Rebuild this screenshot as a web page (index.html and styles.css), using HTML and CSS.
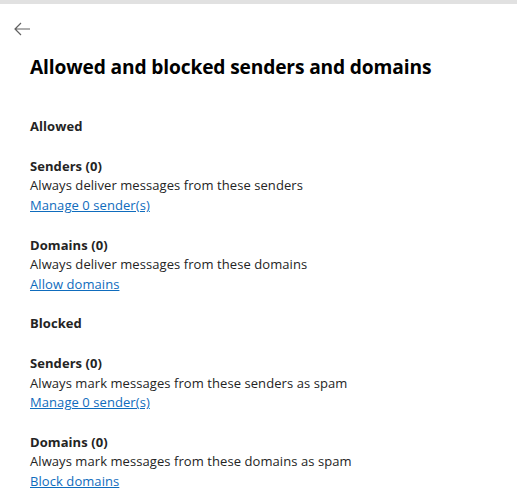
FILE: index.html
```html
<!DOCTYPE html>
<html lang="en">
<head>
<meta charset="utf-8">
<title>Allowed and blocked senders and domains</title>
<link rel="stylesheet" href="styles.css">
</head>
<body>
<div class="topbar"></div>
<div class="panel">
  <button class="back" aria-label="Back">
    <svg width="16" height="14" viewBox="0 0 16 14" fill="none" stroke="#616161" stroke-width="1.2">
      <path d="M16 7H1M7 1L1 7l6 6"/>
    </svg>
  </button>
  <h1 class="title">Allowed and blocked senders and domains</h1>
  <div class="content">
    <h2 class="section">Allowed</h2>
    <div class="group">
      <div class="label">Senders (0)</div>
      <div class="desc">Always deliver messages from these senders</div>
      <a class="link" href="#">Manage 0 sender(s)</a>
    </div>
    <div class="group">
      <div class="label">Domains (0)</div>
      <div class="desc">Always deliver messages from these domains</div>
      <a class="link" href="#">Allow domains</a>
    </div>
    <h2 class="section">Blocked</h2>
    <div class="group">
      <div class="label">Senders (0)</div>
      <div class="desc">Always mark messages from these senders as spam</div>
      <a class="link" href="#">Manage 0 sender(s)</a>
    </div>
    <div class="group">
      <div class="label">Domains (0)</div>
      <div class="desc">Always mark messages from these domains as spam</div>
      <a class="link" href="#">Block domains</a>
    </div>
  </div>
</div>
</body>
</html>
```
FILE: styles.css
```css
html, body {
  margin: 0;
  padding: 0;
  background: #ffffff;
}
body {
  font-family: "Open Sans", "Noto Sans", sans-serif;
  color: #242424;
  overflow: hidden;
}
.topbar {
  height: 4px;
  background: #e1e1e1;
}
.panel {
  padding: 0 0 0 30px;
}
.back {
  display: flex;
  align-items: center;
  justify-content: flex-start;
  margin: 17px 0 0 -16px;
  width: 16px;
  height: 16px;
  padding: 0;
  border: 0;
  background: none;
}
.title {
  margin: 16px 0 0;
  font-size: 19.2px;
  line-height: 28px;
  font-weight: 700;
  letter-spacing: -0.15px;
  color: #000000;
}
.content {
  display: flex;
  flex-direction: column;
  align-items: flex-start;
  gap: 20.3px;
  margin-top: 36px;
  font-size: 13px;
  line-height: 19.5px;
  letter-spacing: 0.07px;
}
.section {
  margin: 0;
  font-size: 13px;
  line-height: 19.5px;
  font-weight: 700;
}
.group {
  display: flex;
  flex-direction: column;
  align-items: flex-start;
}
.label {
  font-weight: 700;
}
.desc {
  color: #242424;
}
.link {
  color: #0f6cbd;
  text-decoration: underline;
}
```
